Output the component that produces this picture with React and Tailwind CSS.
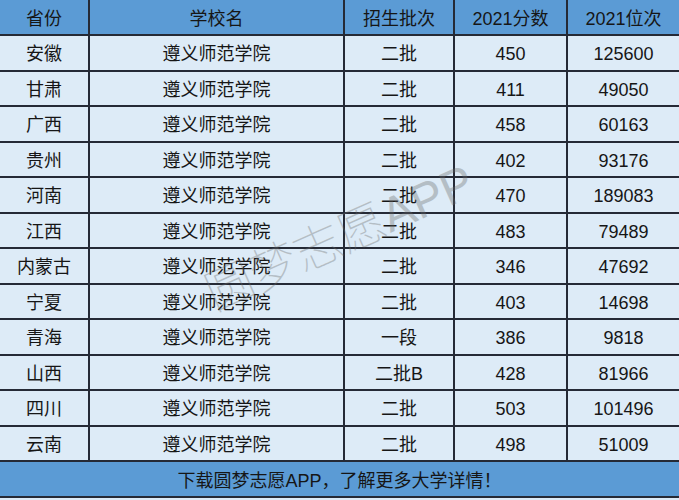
import React from "react";

const rows = [
  ["安徽", "遵义师范学院", "二批", "450", "125600"],
  ["甘肃", "遵义师范学院", "二批", "411", "49050"],
  ["广西", "遵义师范学院", "二批", "458", "60163"],
  ["贵州", "遵义师范学院", "二批", "402", "93176"],
  ["河南", "遵义师范学院", "二批", "470", "189083"],
  ["江西", "遵义师范学院", "二批", "483", "79489"],
  ["内蒙古", "遵义师范学院", "二批", "346", "47692"],
  ["宁夏", "遵义师范学院", "二批", "403", "14698"],
  ["青海", "遵义师范学院", "一段", "386", "9818"],
  ["山西", "遵义师范学院", "二批B", "428", "81966"],
  ["四川", "遵义师范学院", "二批", "503", "101496"],
  ["云南", "遵义师范学院", "二批", "498", "51009"],
];

const font = { fontFamily: '"Liberation Sans", "Noto Sans CJK SC", sans-serif' };

function Row({ cells, header }) {
  return (
    <div
      className={`grid grid-cols-[90px_255px_110px_113px_1fr] border-b-2 border-[#252a36] ${
        header ? "h-[36px] bg-[#5b9bd5]" : "h-[35.5px] bg-[#ddebf7]"
      }`}
    >
      {cells.map((c, i) => (
        <div
          key={i}
          className={`flex items-center justify-center pt-[3px] ${
            i < 4 ? "border-r-2 border-[#252a36]" : ""
          } text-[18px] text-[#161616] leading-none`}
        >
          {c}
        </div>
      ))}
    </div>
  );
}

export default function App() {
  return (
    <div className="relative w-[679px] h-[500px] overflow-hidden bg-[#ddebf7]" style={font}>
      <Row header cells={["省份", "学校名", "招生批次", "2021分数", "2021位次"]} />
      {rows.map((r, i) => (
        <Row key={i} cells={r} />
      ))}
      <div className="h-[36px] bg-[#5b9bd5] border-b-2 border-[#252a36] flex items-center justify-center pt-[4px] text-[18px] text-[#161616]">
        下载圆梦志愿APP，了解更多大学详情！
      </div>
      <div className="absolute left-[195px] top-[208px] w-[290px] h-[60px] flex items-center justify-center pointer-events-none">
        <span className="rotate-[-24deg] whitespace-nowrap text-[48px] font-thin text-[#6b6b6b] opacity-35">
          圆梦志愿APP
        </span>
      </div>
    </div>
  );
}
